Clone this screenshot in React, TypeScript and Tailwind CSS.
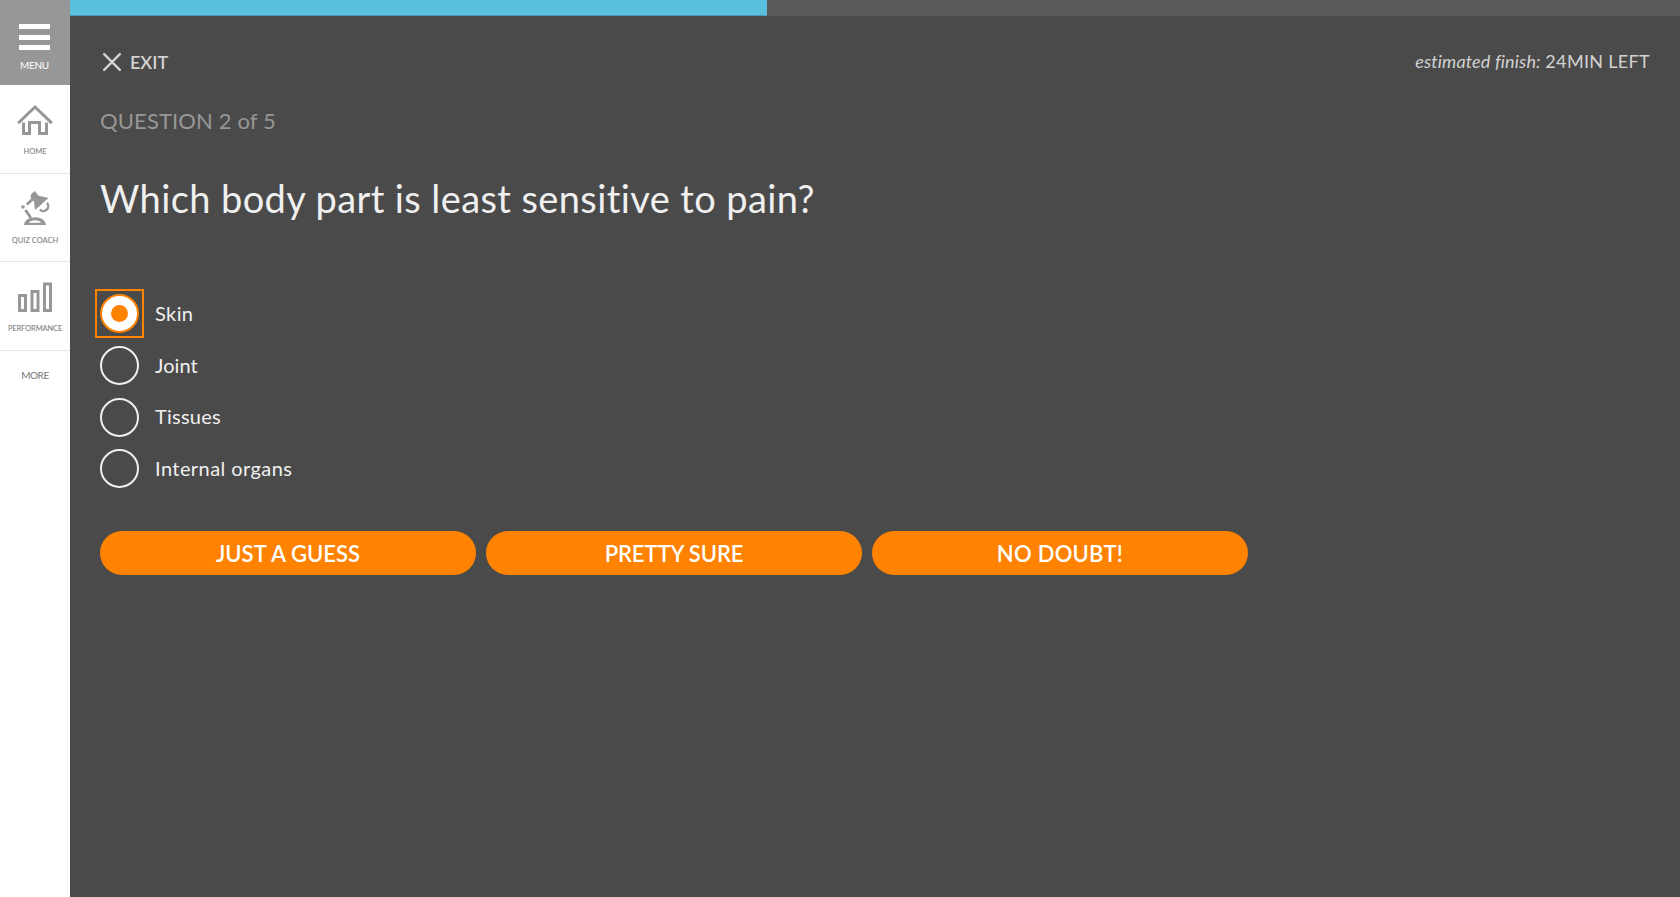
import { useState } from 'react';
import type { ReactNode } from 'react';

const HomeIcon = () => (
  <svg width="36" height="32" viewBox="0 0 36 32" fill="none" stroke="#979797" strokeWidth="3">
    <path d="M1.2 19.2 18 3l16.8 16.2" />
    <path d="M6.5 18.500v11h6V18.500h10v11h7v-11" />
  </svg>
);

const LampIcon = () => (
  <svg width="36" height="36" viewBox="0 0 36 36" fill="#979797">
    <path d="M13.800 4.800 17.600 1l4 4.800 9.900 2.200L18 20l-1-8.500-3.300-3.700z" />
    <path d="m15.500 9.200-5.700 5.400M8.400 20l5.400 7.800" fill="none" stroke="#979797" strokeWidth="2.800" />
    <path d="M29.900 12.900a4.700 4.700 0 0 1-7 6.600" fill="none" stroke="#979797" strokeWidth="2.400" />
    <circle cx="6" cy="17" r="1.800" />
    <path fillRule="evenodd" d="M7 35c.4-4.800 5-7.700 11-7.700s10.600 2.900 11 7.700zm5-2.300h12c-1.100-1.700-3-2.100-6-2.100s-4.900.4-6 2.100z" />
  </svg>
);

const BarsIcon = () => (
  <svg width="36" height="32" viewBox="0 0 36 32" fill="none" stroke="#979797" strokeWidth="3">
    <path d="M2.500 14.500h6v15h-6zM15 10.500h6v19h-6zM27.500 3h6v26.500h-6z" />
  </svg>
);

function NavItem({ icon, label, spacing }: { icon: ReactNode; label: string; spacing: string }) {
  return (
    <a href="#" className="flex h-[88.500px] flex-col items-center border-b border-[#e6e6e6]">
      <span className="flex h-[59px] items-center justify-center pt-2.5">{icon}</span>
      <span className={`mt-[1.200px] whitespace-nowrap font-semibold leading-[14px] text-[#8a8a8a] ${spacing}`}>{label}</span>
    </a>
  );
}

const answers = [
  { label: 'Skin', spacing: 'tracking-[0.400px]' },
  { label: 'Joint', spacing: 'tracking-[0.050px]' },
  { label: 'Tissues', spacing: 'tracking-[0.250px]' },
  { label: 'Internal organs', spacing: 'tracking-[0.430px]' },
];
const levels = [
  { label: 'JUST A GUESS', spacing: 'tracking-[0.050px]' },
  { label: 'PRETTY SURE', spacing: 'tracking-[-0.100px]' },
  { label: 'NO DOUBT!', spacing: 'tracking-[0.250px]' },
];

export default function App() {
  const [selected, setSelected] = useState(0);
  return (
    <div className="flex h-screen overflow-hidden bg-[#4a4a4a] font-['Lato',sans-serif]">
      <aside className="flex w-[70px] shrink-0 flex-col bg-white">
        <button className="flex h-[85px] flex-col items-center bg-[#979797] pt-6 pr-[1px] text-white">
          <span className="flex w-[31px] flex-col gap-[5.500px]">
            <span className="h-[5px] bg-white" />
            <span className="h-[5px] bg-white" />
            <span className="h-[5px] bg-white" />
          </span>
          <span className="mt-2 text-[10px] leading-[14px] tracking-[-0.300px]">MENU</span>
        </button>
        <NavItem icon={<HomeIcon />} label="HOME" spacing="text-[7.500px]" />
        <NavItem icon={<LampIcon />} label="QUIZ COACH" spacing="text-[7.500px]" />
        <NavItem icon={<BarsIcon />} label="PERFORMANCE" spacing="text-[7.500px] tracking-[-0.150px]" />
        <a href="#" className="mt-[17px] text-center text-[10px] leading-[14px] tracking-[-0.500px] text-[#777]">MORE</a>
      </aside>

      <main className="flex grow flex-col">
        <div className="h-4 shrink-0 bg-[#58595b]">
          <div className="h-4 w-[697px] border-b border-[#4a9ab5] bg-[#5bc0de]" />
        </div>

        <header className="mt-[33px] flex h-[26px] items-center justify-between pl-[33px] pr-[30px] text-[#d2d2d2]">
          <button className="flex items-center gap-[9px]">
            <svg width="18" height="18" viewBox="0 0 18 18" stroke="#d2d2d2" strokeWidth="2.400" strokeLinecap="round">
              <path d="m1.200 1.200 15.600 15.600M16.800 1.200 1.200 16.800" />
            </svg>
            <span className="text-[18px] font-semibold leading-[26px]">EXIT</span>
          </button>
          <p className="pb-0.5 text-[18px] leading-[26px]">
            <em className="tracking-[0.150px]">estimated finish:</em> <span className="tracking-[0.320px]">24MIN LEFT</span>
          </p>
        </header>

        <section className="flex flex-col items-start pl-[30px]">
          <p className="mt-[31px] text-[22px] leading-[30px] tracking-[0.130px] text-[#979797]">QUESTION 2 of 5</p>
          <h1 className="mt-[38px] text-[38px] leading-[48px] tracking-[0.400px] text-[#f0f0f0]">
            Which body part is least sensitive to pain?
          </h1>

          <div role="radiogroup" className="mt-[72px] flex flex-col gap-[12.750px]">
            {answers.map((answer, i) => (
              <button key={answer.label} role="radio" aria-checked={i === selected} onClick={() => setSelected(i)} className="flex h-[39px] items-center gap-4">
                {i === selected ? (
                  <span className="-m-[5px] flex size-[49px] items-center justify-center border-2 border-[#ff8200]">
                    <span className="flex size-[39px] shrink-0 items-center justify-center rounded-full border-2 border-[#ff8200] bg-white">
                      <span className="size-[17px] rounded-full bg-[#ff8200]" />
                    </span>
                  </span>
                ) : (
                  <span className="size-[39px] rounded-full border-2 border-[#f0f0f0]" />
                )}
                <span className={`pb-[1.200px] text-[20px] leading-7 text-[#f0f0f0] ${answer.spacing}`}>{answer.label}</span>
              </button>
            ))}
          </div>

          <div className="mt-[42.750px] flex gap-2.5">
            {levels.map((level) => (
              <button key={level.label} className={`h-11 w-[376px] rounded-[22px] bg-[#ff8200] pt-px text-[22px] font-semibold leading-[30px] text-white ${level.spacing}`}>
                {level.label}
              </button>
            ))}
          </div>
        </section>
      </main>
    </div>
  );
}
